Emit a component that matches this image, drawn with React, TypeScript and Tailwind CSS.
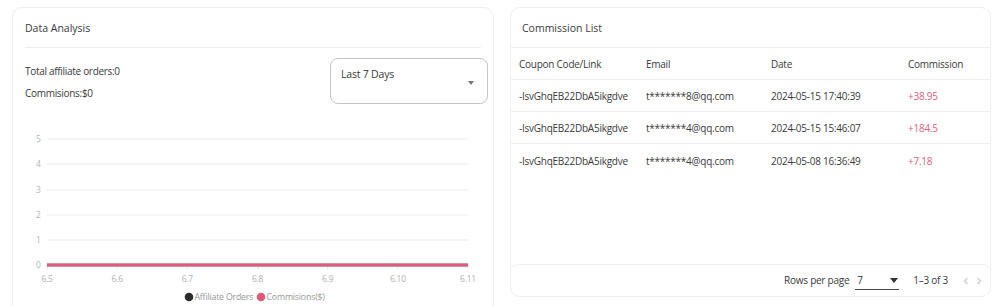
import React from "react";

const rows = [
  { code: "-IsvGhqEB22DbA5ikgdve", email: "t*******8@qq.com", date: "2024-05-15 17:40:39", amt: "+38.95" },
  { code: "-IsvGhqEB22DbA5ikgdve", email: "t*******4@qq.com", date: "2024-05-15 15:46:07", amt: "+184.5" },
  { code: "-IsvGhqEB22DbA5ikgdve", email: "t*******4@qq.com", date: "2024-05-08 16:36:49", amt: "+7.18" },
];

function Chart() {
  const ys = [
    { v: "5", y: 19 },
    { v: "4", y: 44 },
    { v: "3", y: 70 },
    { v: "2", y: 95 },
    { v: "1", y: 120 },
    { v: "0", y: 145 },
  ];
  const xs = ["6.5", "6.6", "6.7", "6.8", "6.9", "6.10", "6.11"];
  return (
    <svg width="482" height="186" className="block" style={{ fontFamily: "'Open Sans', sans-serif" }}>
      {ys.map((t) => (
        <g key={t.v}>
          <text x="27.5" y={t.y + 3} fontSize="8.5" fill="#b5b5b5" textAnchor="end">
            {t.v}
          </text>
          {t.v !== "0" && <line x1="34" x2="455" y1={t.y} y2={t.y} stroke="#ececec" strokeWidth="1" />}
        </g>
      ))}
      {xs.map((x, i) => (
        <g key={x}>
          <line x1={34 + i * 70.17} x2={34 + i * 70.17} y1="145" y2="149" stroke="#e2e2e2" strokeWidth="1" />
          <text x={34 + i * 70.17} y="162" fontSize="8.5" fill="#b0b0b0" textAnchor="middle">
            {x}
          </text>
        </g>
      ))}
      <line x1="34" x2="455" y1="145" y2="145" stroke="#333333" strokeWidth="2.5" />
      <line x1="34" x2="455" y1="145" y2="145" stroke="#de5b79" strokeWidth="3" />
      <circle cx="176" cy="177" r="4.3" fill="#2b2b2b" />
      <text x="181.5" y="180" fontSize="8.8" fill="#999999" letterSpacing="-0.2">
        Affiliate Orders
      </text>
      <circle cx="248" cy="177" r="4.3" fill="#e0587a" />
      <text x="253.5" y="180" fontSize="8.8" fill="#999999" letterSpacing="-0.2">
        Commisions($)
      </text>
    </svg>
  );
}

export default function App() {
  return (
    <div
      className="flex w-[999px] h-[306px] overflow-hidden bg-white pl-[12px] pt-[7px] gap-[16px] text-[#3a3a3a] text-[10px] tracking-[-0.25px]"
      style={{ fontFamily: "'Open Sans', 'Noto Sans', sans-serif" }}
    >
      <div className="w-[482px] h-[320px] shrink-0 rounded-[10px] border border-[#eeeeee] flex flex-col">
        <div className="mx-[12px] h-[40px] pt-[2px] flex items-center border-b border-[#eeeeee] text-[10.5px] tracking-[0px]">
          Data Analysis
        </div>
        <div className="flex justify-between pl-[12px] pr-[5px] pt-[10px]">
          <div className="flex flex-col pt-[2px] tracking-[-0.3px]">
            <div className="h-[22px] flex items-center">Total affiliate orders:0</div>
            <div className="h-[22px] flex items-center">Commisions:$0</div>
          </div>
          <div className="w-[158px] h-[46px] rounded-[8px] border border-[#c4c4c4] flex justify-between pl-[10px] pr-[13px] pt-[8px] text-[10.5px] tracking-[-0.2px]">
            <span>Last 7 Days</span>
            <svg width="6" height="4" viewBox="0 0 6 4" className="mt-[14px]">
              <path d="M0 0 L6 0 L3 4 Z" fill="#777" />
            </svg>
          </div>
        </div>
        <div className="mt-[16px]">
          <Chart />
        </div>
      </div>

      <div className="w-[481px] h-[290px] shrink-0 rounded-[10px] border border-[#eeeeee] flex flex-col">
        <div className="h-[40px] pt-[2px] flex items-center px-[11px] border-b border-[#eeeeee] text-[10.5px] tracking-[0px]">
          Commission List
        </div>
        <div className="flex-1">
          <div className="flex h-[32px] pt-[2px] items-center border-b border-[#eeeeee] pl-[8px]">
            <div className="w-[127px]">Coupon Code/Link</div>
            <div className="w-[125px]">Email</div>
            <div className="w-[137px]">Date</div>
            <div>Commission</div>
          </div>
          {rows.map((r, i) => (
            <div
              key={i}
              className={`flex h-[32px] pt-[2px] items-center pl-[8px] ${i < 2 ? "border-b border-[#eeeeee]" : ""}`}
            >
              <div className="w-[127px]">{r.code}</div>
              <div className="w-[125px]">{r.email}</div>
              <div className="w-[137px]">{r.date}</div>
              <div className="text-[#d9627f]">{r.amt}</div>
            </div>
          ))}
        </div>
        <div className="h-[32px] border-t border-[#eeeeee] rounded-t-[8px] flex items-center justify-end pr-[7px]">
          <span>Rows per page</span>
          <div className="ml-[6px] w-[44px] h-[18px] border-b border-[#444] flex items-center justify-between pl-[2px] pr-[1px]">
            <span>7</span>
            <svg width="8" height="5" viewBox="0 0 8 5">
              <path d="M0 0 L8 0 L4 5 Z" fill="#333" />
            </svg>
          </div>
          <span className="ml-[14px]">1–3 of 3</span>
          <span className="ml-[14px] flex gap-[5px]">
            <svg width="8" height="10" viewBox="0 0 8 10">
              <path d="M5.5 2 L2.5 5 L5.5 8" stroke="#cccccc" strokeWidth="1.2" fill="none" />
            </svg>
            <svg width="8" height="10" viewBox="0 0 8 10">
              <path d="M2.5 2 L5.5 5 L2.5 8" stroke="#cccccc" strokeWidth="1.2" fill="none" />
            </svg>
          </span>
        </div>
      </div>
    </div>
  );
}
